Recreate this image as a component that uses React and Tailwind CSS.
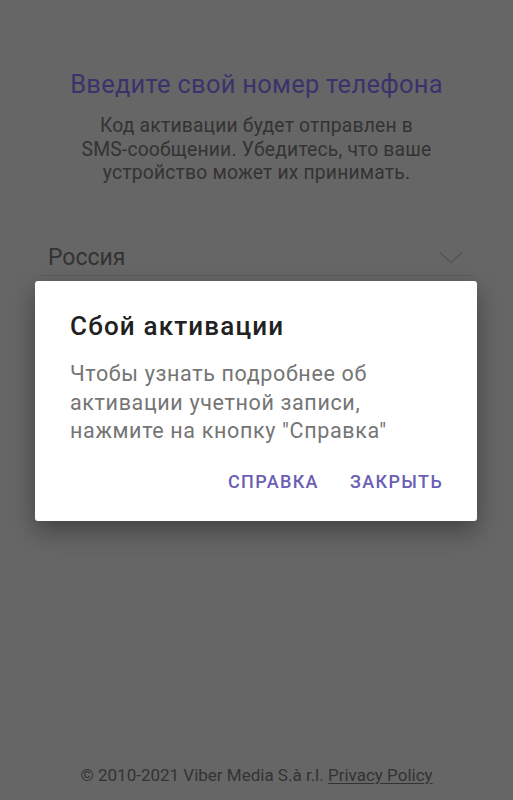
import React from "react";

function Chevron() {
  return (
    <svg width="24" height="14" viewBox="0 0 24 14" fill="none">
      <path d="M1 1.5 L12 11.5 L23 1.5" stroke="#555555" strokeWidth="1.6" />
    </svg>
  );
}

export default function App() {
  return (
    <div
      className="relative h-[800px] w-full overflow-hidden bg-[#666666]"
      style={{ fontFamily: "Roboto, 'Noto Sans', sans-serif" }}
    >
      <div className="flex h-full flex-col">
        <div className="flex flex-col items-center pt-[68px]">
          <h1 className="text-[25.5px] leading-[32px] tracking-[0.01em] text-[#3a336b]">
            Введите свой номер телефона
          </h1>
          <p className="mt-[14px] text-center text-[19.3px] leading-[23.5px] tracking-[0.01em] text-[#333333]">
            Код активации будет отправлен в
            <br />
            SMS-сообщении. Убедитесь, что ваше
            <br />
            устройство может их принимать.
          </p>
        </div>

        <div className="mx-[40px] mt-[58px] flex items-center justify-between border-b border-[#5a5a5a] pb-[2px] pl-[8px] pr-[10px]">
          <span className="text-[23px] leading-[30px] text-[#333333]">Россия</span>
          <Chevron />
        </div>

        <div className="mt-auto pb-[14px] text-center text-[17px] leading-[22px] text-[#333333]">
          © 2010-2021 Viber Media S.à r.l.{" "}
          <span className="underline underline-offset-2">Privacy Policy</span>
        </div>
      </div>

      <div className="absolute left-[35px] top-[281px] w-[442px] rounded-[3px] bg-white pb-[27px] pl-[35px] pr-[34px] pt-[28px] shadow-[0_10px_24px_rgba(0,0,0,0.35)]">
        <h2 className="text-[26px] font-medium leading-[34px] tracking-[0.045em] text-[#212121]">
          Сбой активации
        </h2>
        <p className="mt-[17px] text-[21.5px] leading-[28.5px] tracking-[0.03em] text-[#757575]">
          Чтобы узнать подробнее об
          <br />
          активации учетной записи,
          <br />
          нажмите на кнопку "Справка"
        </p>
        <div className="mt-[24px] flex justify-end gap-[31px] text-[18px] font-medium leading-[24px] tracking-[0.075em] text-[#6a5fb3]">
          <span>СПРАВКА</span>
          <span>ЗАКРЫТЬ</span>
        </div>
      </div>
    </div>
  );
}
